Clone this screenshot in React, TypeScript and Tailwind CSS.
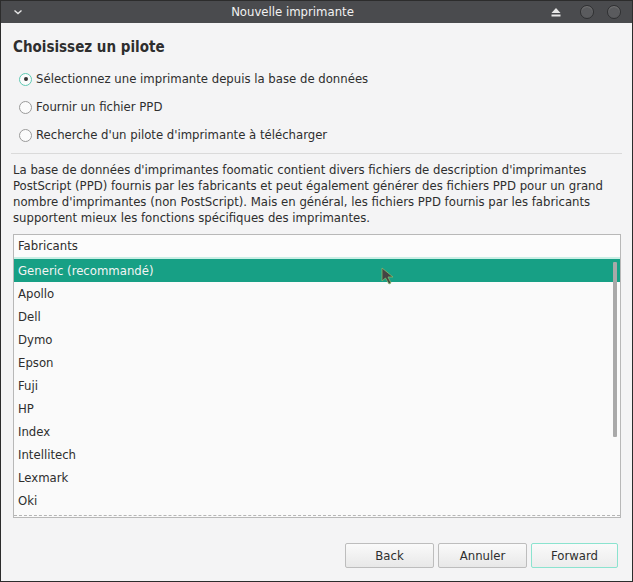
import React from "react";

const makers = [
  "Generic (recommandé)",
  "Apollo",
  "Dell",
  "Dymo",
  "Epson",
  "Fuji",
  "HP",
  "Index",
  "Intellitech",
  "Lexmark",
  "Oki",
];

function Radio({ checked, label }: { checked?: boolean; label: string }) {
  return (
    <div className="flex items-center h-[28px] pl-[6px] gap-[4px]">
      <span
        className={
          "w-[13px] h-[13px] rounded-full border flex items-center justify-center bg-[#fbfbfb] " +
          (checked ? "border-[#5fc9b3]" : "border-[#9a9a9a]")
        }
      >
        {checked && <span className="w-[4px] h-[4px] rounded-full bg-[#333]" />}
      </span>
      <span>{label}</span>
    </div>
  );
}

export default function App() {
  return (
    <div
      className="w-[633px] h-[582px] bg-[#2c2c2c] p-[1px] flex flex-col text-[13px] text-[#2e2e2e]"
      style={{ fontFamily: '"DejaVu Sans Condensed", "DejaVu Sans", sans-serif', fontStretch: "condensed" }}
    >
      {/* title bar */}
      <div className="h-[22px] bg-[#4a4b4e] flex items-center pl-[10px] pr-[11px] text-[#f2f2f2]">
        <svg width="10" height="8" viewBox="0 0 10 8" className="ml-[2px]">
          <path d="M1.5 2.5 L5 5.5 L8.5 2.5" stroke="#e6e6e6" strokeWidth="1.4" fill="none" />
        </svg>
        <div className="flex-1 text-center text-[13px] pl-[12px]">Nouvelle imprimante</div>
        <svg width="12" height="10" viewBox="0 0 12 10">
          <path d="M6 1 L10.5 6 H1.5 Z" fill="#e8e8e8" />
          <rect x="1.5" y="7.5" width="9" height="2" fill="#e8e8e8" />
        </svg>
        <span className="w-[14px] h-[14px] ml-[18px] rounded-full bg-[#5a5b5e] border border-[#2e2f31] shadow-[inset_0_1px_1px_#777]" />
        <span className="w-[14px] h-[14px] ml-[13px] rounded-full bg-[#5a5b5e] border border-[#2e2f31] shadow-[inset_0_1px_1px_#777]" />
      </div>

      {/* body */}
      <div className="flex-1 bg-[#f4f4f5] flex flex-col px-[12px] relative">
        <div className="text-[15px] font-bold mt-[14px] h-[20px] leading-[20px]">Choisissez un pilote</div>
        <div className="mt-[8px]">
          <Radio checked label="Sélectionnez une imprimante depuis la base de données" />
          <Radio label="Fournir un fichier PPD" />
          <Radio label="Recherche d'un pilote d'imprimante à télécharger" />
        </div>
        <div className="h-[1px] bg-[#dadada] mt-[4px] mr-[-2px] ml-[-2px]" />
        <p className="mt-[8px] leading-[16px] pr-[10px]">
          La base de données d'imprimantes foomatic contient divers fichiers de description d'imprimantes PostScript (PPD)
          fournis par les fabricants et peut également générer des fichiers PPD pour un grand nombre d'imprimantes (non
          PostScript). Mais en général, les fichiers PPD fournis par les fabricants supportent mieux les fonctions
          spécifiques des imprimantes.
        </p>

        <div className="mt-[8px] h-[284px] border border-[#b8b8b8] bg-[#fafafa] flex flex-col overflow-hidden relative mr-[-1px]">
          <div className="h-[24px] flex items-center px-[4px] border-b-2 border-[#c9efe5] bg-[#fcfcfc]">Fabricants</div>
          {makers.map((m, i) => (
            <div
              key={m}
              className={
                "h-[23px] shrink-0 flex items-center px-[4px] " + (i === 0 ? "bg-[#17a085] text-[#f4f4f4]" : "")
              }
            >
              {m}
            </div>
          ))}
          <div className="absolute right-[3px] top-[27px] w-[4px] h-[175px] rounded-[1px] bg-[#a9a9a9]" />
          <div className="absolute left-0 right-0 bottom-[1px] border-b border-dashed border-[#b5b5b5]" />
        </div>

        <div className="flex-1" />
        <div className="flex justify-end gap-[4px] mb-[13px] mr-[2px]">
          <button className="w-[89px] h-[25px] border border-[#bdbdbd] rounded-[2px] bg-gradient-to-b from-[#fafafa] to-[#e8e8e8]">
            Back
          </button>
          <button className="w-[89px] h-[25px] border border-[#bdbdbd] rounded-[2px] bg-gradient-to-b from-[#fafafa] to-[#e8e8e8]">
            Annuler
          </button>
          <button className="w-[87px] h-[25px] border border-[#8be3cf] rounded-[2px] bg-gradient-to-b from-[#fafafa] to-[#ececec]">
            Forward
          </button>
        </div>

        {/* mouse cursor */}
        <svg width="14" height="20" viewBox="0 0 14 20" className="absolute left-[380px] top-[244px]">
          <path d="M1 1 L1 14 L4.5 11 L8 17 L10 16 L7 10 L12 10 Z" fill="#444" stroke="#8ab86a" strokeWidth="0.8" />
        </svg>
      </div>
    </div>
  );
}
